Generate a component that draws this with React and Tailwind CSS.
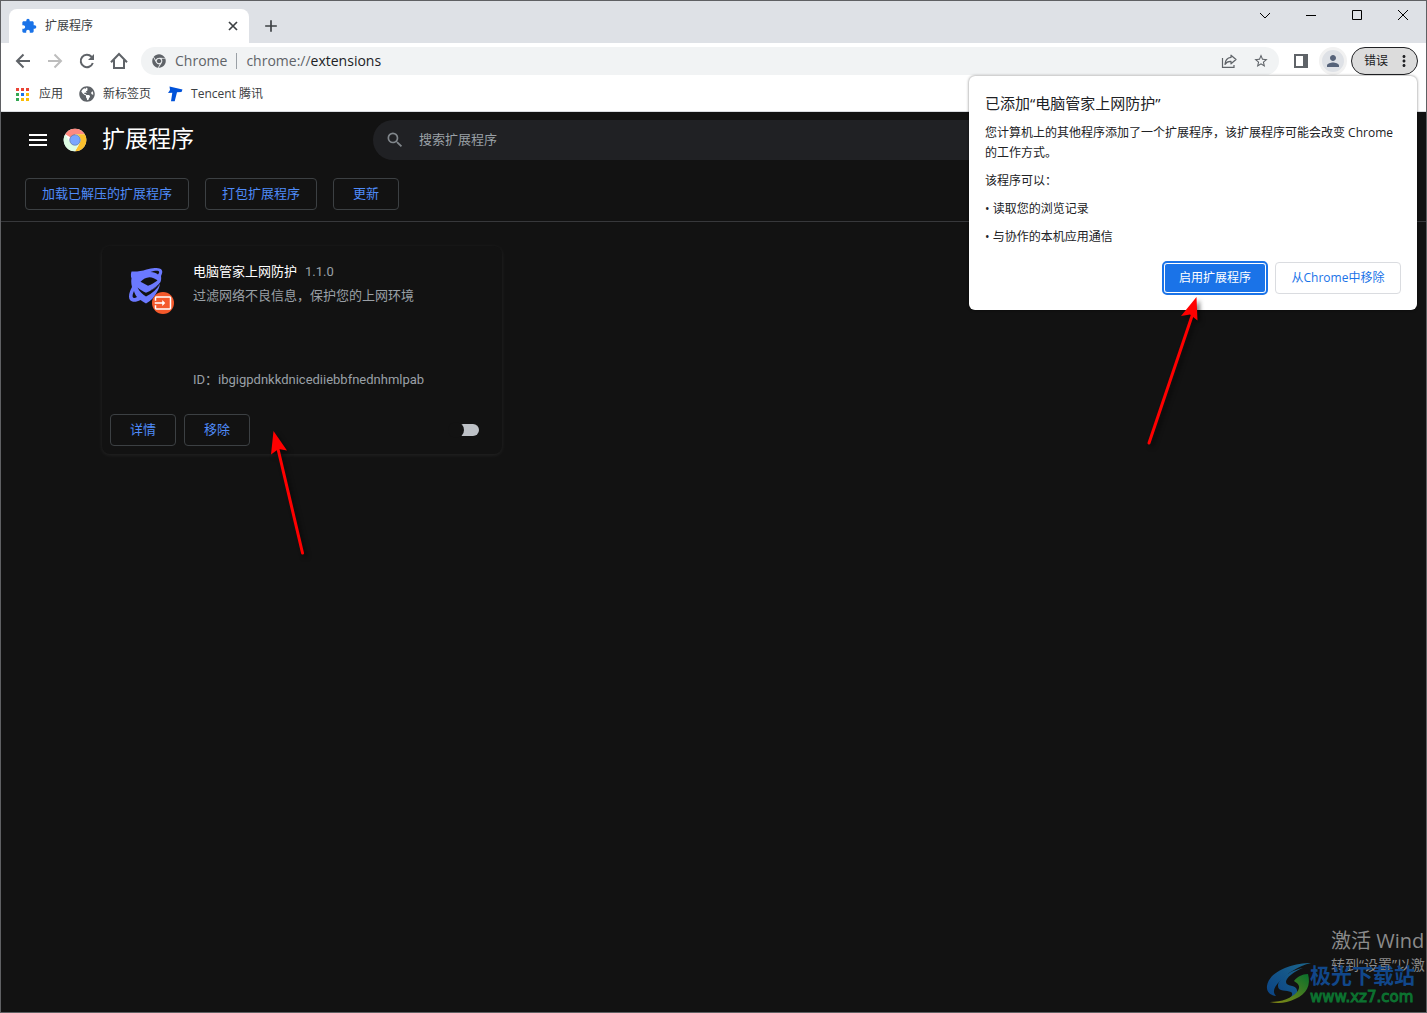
import { FaChrome, FaGlobeAmericas } from "react-icons/fa";
import {
  MdAdd,
  MdExtension,
  MdInput,
  MdMenu,
  MdMoreVert,
  MdPerson,
  MdSearch,
  MdStarBorder,
} from "react-icons/md";

const APP_COLORS = [
  "#ea4335", "#ea4335", "#ea4335",
  "#34a853", "#1a73e8", "#fbbc04",
  "#34a853", "#fbbc04", "#fbbc04",
];

function AppsIcon() {
  return (
    <svg viewBox="0 0 13 13" className="w-[13px] h-[13px]">
      {APP_COLORS.map((c, i) => (
        <rect key={i} x={(i % 3) * 5} y={Math.floor(i / 3) * 5} width="3" height="3" fill={c} />
      ))}
    </svg>
  );
}

// 20px toolbar glyphs share the same 2px stroke
function ToolbarIcon({ children }) {
  return (
    <svg viewBox="0 0 20 20" className="w-5 h-5" fill="none" stroke="currentColor" strokeWidth="2">
      {children}
    </svg>
  );
}

function BackIcon() {
  return (
    <ToolbarIcon>
      <path d="M17 10H4.500M10.500 3.500L4 10l6.500 6.500" />
    </ToolbarIcon>
  );
}

function ForwardIcon() {
  return (
    <ToolbarIcon>
      <path d="M3 10h12.500M9.500 3.500L16 10l-6.500 6.500" />
    </ToolbarIcon>
  );
}

function ReloadIcon() {
  return (
    <ToolbarIcon>
      <path d="M15.800 12a6.200 6.200 0 1 1-1.300-6.300L16 7.500" />
      <path d="M17 3v6h-6z" fill="currentColor" stroke="none" />
    </ToolbarIcon>
  );
}

function HomeIcon() {
  return (
    <ToolbarIcon>
      <path d="M2 11.200L10 3l8 8.200" />
      <path d="M5 9v8h10V9" />
    </ToolbarIcon>
  );
}

function TencentIcon() {
  return (
    <svg viewBox="0 0 16 16" className="w-4 h-4">
      <path d="M2.500.5L9 2l6.500 1.500-1 2.500-4.500.3-2.300 9H4l1.300-8.500L1 7l2-3z" fill="#0052d9" />
    </svg>
  );
}

function ShareIcon() {
  return (
    <svg viewBox="0 0 16 16" className="w-4 h-4" fill="none" stroke="#5f6368" strokeWidth="1.200">
      <path d="M1.500 5v9.400h11.500V12" />
      <path d="M10 2.200l5 4.300-5 4.300V8.400C7 8.300 5.200 9.300 4 11.400c.2-3.800 2.200-6.600 6-7z" strokeLinejoin="round" />
    </svg>
  );
}

function ChromeLogo() {
  return (
    <svg viewBox="0 0 24 24" className="w-6 h-6">
      <circle cx="12" cy="12" r="11.300" fill="#fff" />
      <path d="M12 12L2.210 6.350A11.300 11.300 0 0 1 21.790 6.350H12z" fill="#ff8a80" />
      <path d="M12 6.350h9.790A11.300 11.300 0 0 1 12 23.300l4.900-8.480A5.650 5.650 0 0 0 12 6.350z" fill="#fbc02d" />
      <path d="M2.210 6.350l4.900 8.480A5.650 5.650 0 0 0 16.900 14.820L12 23.300A11.300 11.300 0 0 1 2.210 6.350z" fill="#dcfce3" />
      <circle cx="12" cy="12" r="5.300" fill="#7aa5ff" stroke="#4d6b8c" strokeWidth=".6" />
    </svg>
  );
}

function GuardIcon() {
  return (
    <svg viewBox="0 0 48 48" className="w-12 h-12">
      {/* shield with the orbit lobes, then the dark cut-outs */}
      <path
        d="M5.500 3.500c5 .3 10-.3 15-2 5-1.500 10-2 13-1 3.500 1 3.300 4 1.500 7.500.3 2 .3 4-.5 6-2 3-6 6-11 8.800 4-1.500 7.500-4 10.500-7-.5 3-1.500 6-3.500 9C28.500 29 25 33 20 35.500c-2-1-4-2.200-5.500-3.500-4 2.200-8.500 2.500-10.500 0-2-2.800-.8-8 2-13-.8-3-1-6-.5-8.500C4.700 8 4.700 6 5.500 3.500z"
        fill="#6b79ff"
      />
      <path d="M14.500 13.800C17 11 20 9.500 23.500 9.200c3 .2 5.500 1.500 8 3.300-3 2.300-6 4-9.500 5.200-2.500-1.200-5-2.500-7.500-3.900z" fill="#121212" />
      <path d="M11.500 19.500c3 2.400 5.500 4 8.500 5.200 5.500-2 10-5 14.300-9-3.300 5.300-8 9.500-14.300 12.800-3.500-2-6.300-4.700-8.500-9z" fill="#121212" />
      <path d="M24.500 4c3.500-1.300 7-1.700 8.300-.8.800.7.300 2-.8 3.300-1.800-1.500-4-2.300-7.500-2.500z" fill="#121212" />
      <path d="M8 23c.6 2.500 1.600 4.300 3 6-2 1.300-3.700 1.300-4.200.3-.6-1.200-.1-3.600 1.200-6.300z" fill="#121212" />
      <circle cx="37" cy="35" r="11" fill="#f4592b" />
      <MdInput x="28" y="26" size={18} color="#fff" />
    </svg>
  );
}

function SwooshLogo() {
  return (
    <svg viewBox="0 0 46 42" className="w-[46px] h-[42px]">
      <defs>
        <linearGradient id="swooshBlue" x1="0" y1="1" x2="1" y2="0">
          <stop offset="0" stopColor="#0b4384" />
          <stop offset="1" stopColor="#1c668c" />
        </linearGradient>
        <linearGradient id="swooshGreen" x1="0" y1="1" x2="1" y2="0">
          <stop offset="0" stopColor="#8a8a14" />
          <stop offset="1" stopColor="#08702c" />
        </linearGradient>
      </defs>
      <path d="M45 1C27 1 3 9 1 24c-.7 6 3 9 9 10-4-4-2-9 4-15C22 11 32 4 45 1z" fill="url(#swooshBlue)" />
      <path d="M37 6C23 9 12 17 12 24c0 6 9 4 13 6 3 2 0 6-5 9 8-2 12-7 11-11-1-6-11-3-11-8 0-4 8-11 17-14z" fill="url(#swooshBlue)" />
      <path d="M42 12c3 11-1 20-13 25-8 4-17 5-25 3 12 0 22-4 27-10 4-5 2-8-3-11 3-4 8-7 14-7z" fill="url(#swooshGreen)" />
    </svg>
  );
}

function OutlineButton({ children }) {
  return (
    <button className="h-8 px-4 min-w-[66px] rounded border border-[#3c4043] text-[13px] text-[#4f8bf9]">
      {children}
    </button>
  );
}

function TabStrip() {
  return (
    <div className="flex h-[42px] bg-[#dee1e6] pl-2">
      <div className="flex items-center self-end w-[240px] h-[34px] pl-3 pr-2 rounded-t-lg bg-white">
        <MdExtension className="w-4 h-4 text-[#1a73e8]" />
        <span className="ml-2 flex-1 text-xs text-[#3c4043]">扩展程序</span>
        <button aria-label="关闭标签页">
          <svg viewBox="0 0 16 16" className="w-4 h-4 text-[#3c4043]" stroke="currentColor" strokeWidth="1.700">
            <path d="M4 4l8 8M12 4l-8 8" />
          </svg>
        </button>
      </div>
      <button aria-label="打开新的标签页" className="self-end mb-[7px] ml-3">
        <MdAdd className="w-5 h-5 text-[#3c4043]" />
      </button>
      <div className="ml-auto flex h-7 text-black">
        <button aria-label="搜索标签页" className="w-[46px] flex items-center justify-center">
          <svg viewBox="0 0 10 10" className="w-[10px] h-[10px]" fill="none" stroke="currentColor">
            <path d="M0 3l5 5 5-5" />
          </svg>
        </button>
        <button aria-label="最小化" className="w-[46px] flex items-center justify-center">
          <svg viewBox="0 0 10 10" className="w-[10px] h-[10px]" stroke="currentColor">
            <path d="M0 5.500h10" />
          </svg>
        </button>
        <button aria-label="最大化" className="w-[46px] flex items-center justify-center">
          <svg viewBox="0 0 10 10" className="w-[10px] h-[10px]" fill="none" stroke="currentColor">
            <path d="M.5.500h9v9h-9z" />
          </svg>
        </button>
        <button aria-label="关闭" className="w-[46px] flex items-center justify-center">
          <svg viewBox="0 0 10 10" className="w-[10px] h-[10px]" stroke="currentColor">
            <path d="M0 0l10 10M10 0L0 10" />
          </svg>
        </button>
      </div>
    </div>
  );
}

function Toolbar() {
  return (
    <div className="flex items-center h-9 pl-3 pr-2 text-[#5f6368]">
      <div className="flex gap-3">
        <button aria-label="后退"><BackIcon /></button>
        <button aria-label="前进" className="text-[#bdbdbd]"><ForwardIcon /></button>
        <button aria-label="重新加载"><ReloadIcon /></button>
        <button aria-label="主页"><HomeIcon /></button>
      </div>
      <div className="flex flex-1 items-center h-7 ml-3 pl-[11px] pr-[10px] rounded-full bg-[#f1f3f4] text-sm">
        <FaChrome className="w-[14px] h-[14px]" />
        <span className="ml-[9px]">Chrome</span>
        <span className="w-px h-4 mx-[9px] bg-[#9aa0a6]" />
        <div role="textbox" aria-label="地址和搜索栏" className="flex-1">
          chrome://<span className="text-[#202124]">extensions</span>
        </div>
        <button aria-label="分享此页面"><ShareIcon /></button>
        <button aria-label="为此标签页添加书签" className="ml-4">
          <MdStarBorder className="w-4 h-4" />
        </button>
      </div>
      <button aria-label="侧边栏" className="ml-[15px]">
        <svg viewBox="0 0 14 14" className="w-[14px] h-[14px]">
          <path d="M0 0h14v14H0zM2 2v10h7V2z" fill="#5f6368" fillRule="evenodd" />
        </svg>
      </button>
      <button aria-label="用户" className="flex items-center justify-center w-7 h-7 ml-[11px] rounded-full border-[3px] border-[#f1f1f1] bg-[#dee1e6]">
        <MdPerson className="w-[18px] h-[18px] text-[#56637a]" />
      </button>
      <button className="flex items-center h-7 w-[67px] ml-1 pl-3 rounded-full border border-[#202124] bg-[#dcdcdc] text-xs text-[#202124] whitespace-nowrap">
        错误
        <MdMoreVert className="w-[18px] h-[18px] ml-[7px] shrink-0" />
      </button>
    </div>
  );
}

function BookmarksBar() {
  return (
    <nav className="flex items-center h-[33px] px-[15px] pb-[2px] gap-4 border-b border-[#dadce0] text-xs text-[#3c4043]">
      <a href="#apps" className="flex items-center gap-[10px]"><AppsIcon />应用</a>
      <a href="#newtab" className="flex items-center gap-2">
        <FaGlobeAmericas className="w-4 h-4 text-[#5f6368]" />新标签页
      </a>
      <a href="#tencent" className="flex items-center gap-2"><TencentIcon />Tencent 腾讯</a>
    </nav>
  );
}

function ExtensionCard() {
  return (
    <article className="flex flex-col w-[400px] h-[208px] rounded-lg bg-[#121212] shadow-[0_1px_4px_rgba(255,255,255,0.08)]">
      <div className="flex flex-1 pl-6 pt-4">
        <div className="pt-[6px]"><GuardIcon /></div>
        <div className="flex-1 ml-[19px] text-[13px] leading-5 text-[#9aa0a6]">
          <div className="flex gap-2">
            <h2 className="text-white">电脑管家上网防护</h2>
            <span>1.1.0</span>
          </div>
          <p className="mt-1">过滤网络不良信息，保护您的上网环境</p>
          <p className="mt-16">ID：ibgigpdnkkdnicediiebbfnednhmlpab</p>
        </div>
      </div>
      <div className="flex items-center gap-2 pl-2 pr-[23px] pb-2">
        <OutlineButton>详情</OutlineButton>
        <OutlineButton>移除</OutlineButton>
        <input
          type="checkbox"
          aria-label="启用电脑管家上网防护"
          className="relative appearance-none ml-auto w-[26px] h-3 rounded-full bg-[#bdc1c6] before:absolute before:-left-[5px] before:-top-[2px] before:w-4 before:h-4 before:rounded-full before:bg-[#121212]"
        />
      </div>
    </article>
  );
}

function AddedDialog() {
  return (
    <div
      role="dialog"
      aria-labelledby="added-title"
      className="absolute top-[75px] right-[9px] w-[448px] px-4 pt-[15px] pb-4 rounded-md bg-white text-xs leading-5 text-[#202124] shadow-[0_0_3px_rgba(0,0,0,0.5)]"
    >
      <h2 id="added-title" className="text-[15px] leading-6">已添加“电脑管家上网防护”</h2>
      <p className="mt-2">您计算机上的其他程序添加了一个扩展程序，该扩展程序可能会改变 Chrome 的工作方式。</p>
      <p className="mt-2">该程序可以：</p>
      <p className="mt-2">• 读取您的浏览记录</p>
      <p className="mt-2">• 与协作的本机应用通信</p>
      <div className="flex items-center justify-end gap-[9px] mt-[15px]">
        <button className="h-[30px] w-[102px] rounded-[3px] bg-[#1a73e8] border border-white text-white outline-2 outline-[#1a73e8]">
          启用扩展程序
        </button>
        <button className="h-8 w-[126px] rounded border border-[#dadce0] text-[#1a73e8]">从Chrome中移除</button>
      </div>
    </div>
  );
}

// red pointer arrows drawn over the window
function Arrows() {
  return (
    <>
      <svg viewBox="0 0 60 160" className="absolute top-[289px] right-[224px] w-[60px] h-[160px] pointer-events-none drop-shadow-[3px_3px_2px_rgba(0,0,0,0.5)]">
        <path d="M7 153L50 26" stroke="#f00" strokeWidth="3" strokeLinecap="round" />
        <path d="M54.500 7L39 26l9-1.500 7.500 6z" fill="#f00" />
      </svg>
      <svg viewBox="0 0 50 136" className="absolute top-[424px] left-[259px] w-[50px] h-[136px] pointer-events-none drop-shadow-[3px_3px_2px_rgba(0,0,0,0.5)]">
        <path d="M42.500 128L18 24" stroke="#f00" strokeWidth="3" strokeLinecap="round" />
        <path d="M13.500 6L11 29.500l7.500-5.500 8.500 1.500z" fill="#f00" />
      </svg>
    </>
  );
}

function Watermarks() {
  return (
    <div className="absolute bottom-0 right-0 w-[160px] h-[85px] overflow-hidden whitespace-nowrap pointer-events-none">
      <div className="ml-[65px] text-[#8b8b8b]">
        <p className="text-xl leading-7">激活 Wind</p>
        <p className="text-sm leading-5">转到“设置”以激</p>
      </div>
      <div className="absolute left-0 bottom-2"><SwooshLogo /></div>
      <div className="absolute left-[44px] bottom-[5px]">
        <p className="text-[21px] leading-6 font-bold text-[#11478a]">极光下载站</p>
        <p className="text-[15px] leading-5 text-[#0c7230] [-webkit-text-stroke:1px] font-['DejaVu_Sans',sans-serif]">www.xz7.com</p>
      </div>
    </div>
  );
}

export default function App() {
  return (
    <div className="relative flex flex-col min-h-screen overflow-hidden border border-[#5f6063] bg-[#121212] font-['Open_Sans','Noto_Sans_CJK_SC',sans-serif]">
      <header className="bg-white">
        <TabStrip />
        <Toolbar />
        <BookmarksBar />
      </header>

      <main className="flex-1 font-['Roboto','Noto_Sans_CJK_SC',sans-serif]">
        <div className="flex items-center h-14 pl-[25px]">
          <div className="flex items-center w-[347px]">
            <button aria-label="主菜单"><MdMenu className="w-6 h-6 text-white" /></button>
            <span className="ml-[13px]"><ChromeLogo /></span>
            <h1 className="ml-[15px] text-[23px] text-white">扩展程序</h1>
          </div>
          <label className="flex items-center w-[680px] h-10 pl-3 rounded-full bg-[#202124]">
            <MdSearch className="w-5 h-5 text-[#80868b]" />
            <input
              type="search"
              aria-label="搜索扩展程序"
              placeholder="搜索扩展程序"
              className="flex-1 ml-[14px] bg-transparent text-[13px] placeholder:text-[#9aa0a6] outline-none"
            />
          </label>
        </div>
        <div className="flex items-center gap-4 h-[54px] px-6 pb-px border-b border-[#37383b]">
          <OutlineButton>加载已解压的扩展程序</OutlineButton>
          <OutlineButton>打包扩展程序</OutlineButton>
          <OutlineButton>更新</OutlineButton>
        </div>
        <div className="pl-[101px] pt-6">
          <ExtensionCard />
        </div>
      </main>

      <AddedDialog />
      <Arrows />
      <Watermarks />
    </div>
  );
}
